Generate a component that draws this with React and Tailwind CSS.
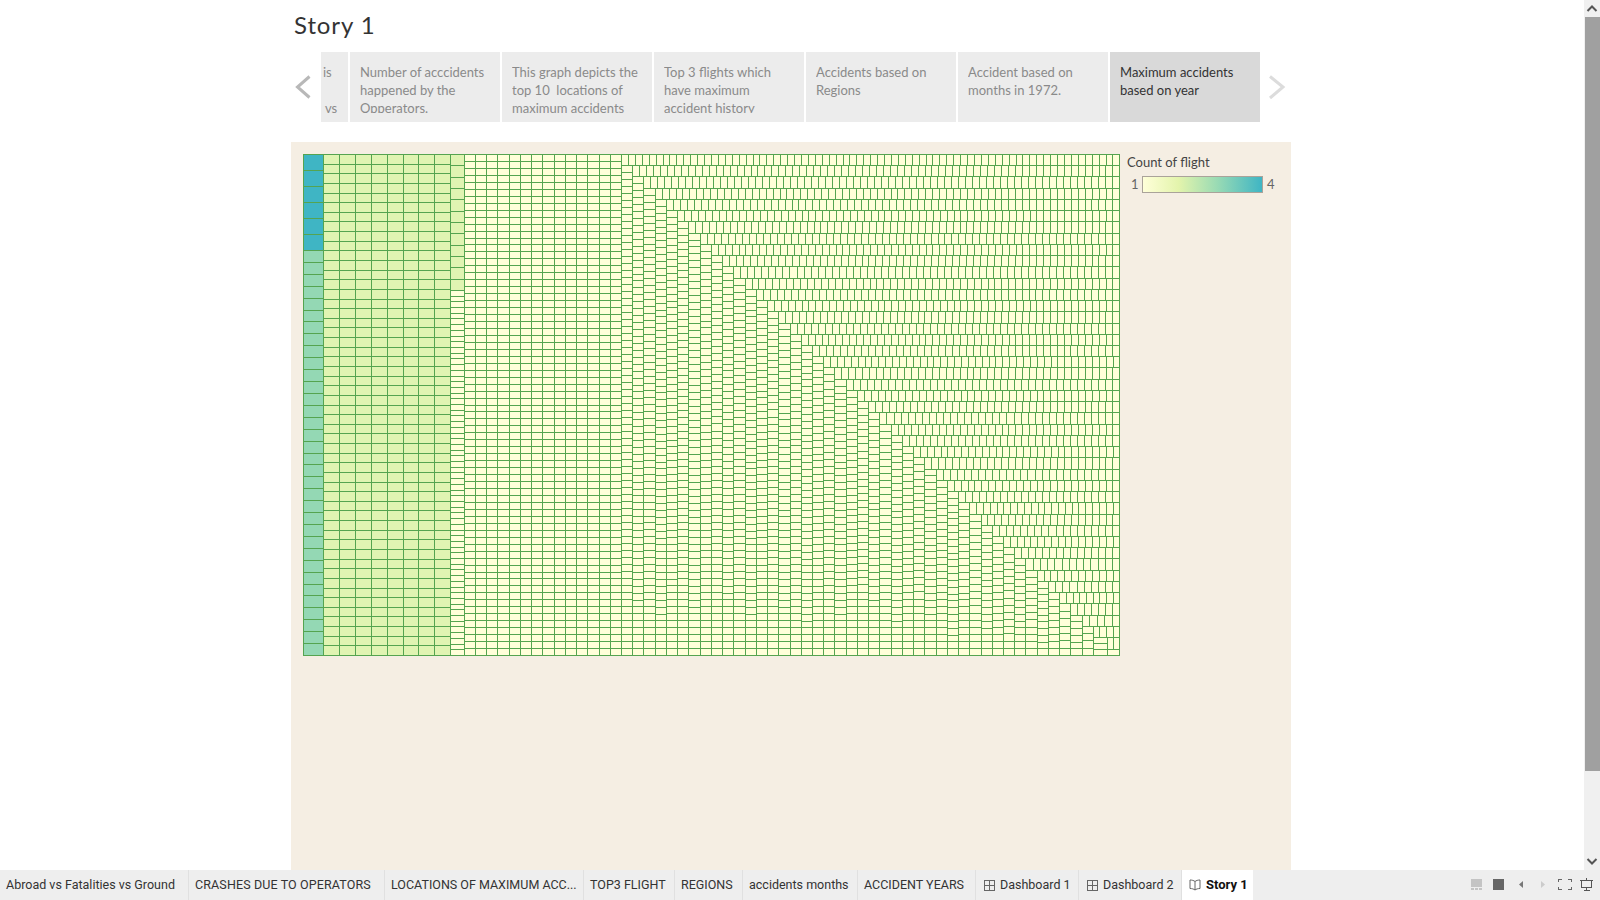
import React from "react";

const LEFT = 303;
const TOP = 154;
const RIGHT = 1119.4;
const BOTTOM = 655;

const TEAL = "#3fb5c4";
const MINT = "#94d8b4";
const LIME = "#e0f4b2";
const CREAM = "#ffffd9";
const CELL = 6.96;
const BLOCK_START = 323;
const BLOCK_COL = 15.9;
const BLOCK_END = BLOCK_START + 8 * BLOCK_COL;

// one column of cells stacked from y0 to y1
const stack = (cells, x0, x1, y0, y1, n, fill) => {
  for (let i = 0; i < n; i++) {
    cells.push({ x0, x1, y0: y0 + ((y1 - y0) * i) / n, y1: y0 + ((y1 - y0) * (i + 1)) / n, fill });
  }
};

// one row of cells side by side from x0 to x1
const line = (cells, x0, x1, y0, y1, n, fill) => {
  for (let i = 0; i < n; i++) {
    cells.push({ x0: x0 + ((x1 - x0) * i) / n, x1: x0 + ((x1 - x0) * (i + 1)) / n, y0, y1, fill });
  }
};

const buildTreemap = () => {
  const cells = [];

  // count 4 and count 3
  stack(cells, LEFT, BLOCK_START, TOP, 250, 6, TEAL);
  stack(cells, LEFT, BLOCK_START, 250, BOTTOM, 34, MINT);

  // count 2 block
  for (let c = 0; c < 8; c++) {
    stack(cells, BLOCK_START + c * BLOCK_COL, BLOCK_START + (c + 1) * BLOCK_COL, TOP, BOTTOM, 52, LIME);
  }
  const split = TOP + 12 * 11.33;
  stack(cells, BLOCK_END, 463.7, TOP, split, 12, LIME);
  stack(cells, BLOCK_END, 463.7, split, BOTTOM, Math.round((BOTTOM - split) / 5.68), CREAM);

  // full height count 1 columns
  const step = 11.235;
  for (let c = 0; c < 13; c++) {
    stack(cells, 463.7 + c * step, 463.7 + (c + 1) * step, TOP, BOTTOM, 72, CREAM);
  }

  // staircase, a column then a row, each one shrinking the free area
  const x0 = 463.7 + 13 * step;
  for (let i = 0; i < 43; i++) {
    const x = x0 + i * step;
    const y = TOP + i * step;
    stack(cells, x, x + step, y, BOTTOM, Math.round((BOTTOM - y) / CELL), CREAM);
    line(cells, x + step, RIGHT, y, y + step, Math.round((RIGHT - x - step) / CELL), CREAM);
  }

  // last corner
  const cx = x0 + 43 * step;
  const cy = TOP + 43 * step;
  stack(cells, cx, 1106.5, cy, BOTTOM, 3, CREAM);
  stack(cells, 1106.5, 1112.7, cy, 649, 1, CREAM);
  stack(cells, 1112.7, RIGHT, cy, 649, 1, CREAM);
  cells.push({ x0: 1106.5, x1: RIGHT, y0: 649, y1: BOTTOM, fill: CREAM });
  return cells;
};

const snap = (v) => Math.round(v) + 0.5;

const Treemap = () => {
  const cells = buildTreemap();
  return (
    <svg width="818" height="502" viewBox="303 154 818 502" shapeRendering="crispEdges" className="block shrink-0">
      {cells.map((c, i) => (
        <rect
          key={i}
          x={snap(c.x0)}
          y={snap(c.y0)}
          width={snap(c.x1) - snap(c.x0)}
          height={snap(c.y1) - snap(c.y0)}
          fill={c.fill}
          stroke="#55a450"
          strokeWidth="1"
        />
      ))}
    </svg>
  );
};

const stories = [
  "Number of acccidents happened by the Opperators.",
  "This graph depicts the top 10  locations of maximum accidents",
  "Top 3 flights which have maximum accident history",
  "Accidents based on Regions",
  "Accident based on months in 1972.",
  "Maximum accidents based on year",
];

const StoryCard = ({ text, active }) => (
  <div className={`w-[150px] h-[70px] pl-[10px] pr-2 pt-[11px] ${active ? "bg-[#d9d9d9] text-[#333333]" : "bg-[#ececec] text-[#8a8a8a]"}`}>
    <div className="h-[50px] overflow-hidden whitespace-pre-wrap text-[13px] leading-[18px]">{text}</div>
  </div>
);

const GridIcon = () => (
  <svg width="11" height="11" viewBox="0 0 11 11" fill="none" stroke="#666666" shapeRendering="crispEdges" className="shrink-0">
    <rect x="0.5" y="0.5" width="10" height="10" />
    <path d="M5.5 0.5V10.5M0.5 5.5H10.5" />
  </svg>
);

const BookIcon = () => (
  <svg width="12" height="12" viewBox="0 0 12 12" fill="none" stroke="#666666" className="shrink-0">
    <path d="M6 2.5C4.8 1.5 3 1 1 1v8.5c2 0 3.8.5 5 1.5 1.2-1 3-1.500 5-1.500V1C9 1 7.200 1.500 6 2.500zM6 2.500V11" />
  </svg>
);

const tabs = [
  { label: "Abroad vs Fatalities vs Ground", width: "w-[189px]" },
  { label: "CRASHES DUE TO OPERATORS", width: "w-[196px]", wide: true },
  { label: "LOCATIONS OF MAXIMUM ACC...", width: "w-[199px]" },
  { label: "TOP3 FLIGHT", width: "w-[91px]" },
  { label: "REGIONS", width: "w-[68px]" },
  { label: "accidents months", width: "w-[115px]" },
  { label: "ACCIDENT YEARS", width: "w-[118px]" },
  { label: "Dashboard 1", width: "w-[103px]", icon: <GridIcon /> },
  { label: "Dashboard 2", width: "w-[103px]", icon: <GridIcon /> },
];

const Tab = ({ label, width, icon, wide }) => (
  <div className={`${width} h-full flex items-center gap-[5px] ${icon ? "pl-[8px]" : "pl-[6px]"} border-r border-[#e0e0e0] whitespace-nowrap text-[#333333]`}>
    {icon}
    <span className={wide ? "tracking-[0.12px]" : ""}>{label}</span>
  </div>
);

const ViewControls = () => (
  <div className="ml-auto flex items-center pr-[7px]">
    <svg width="122" height="14" viewBox="0 0 122 14" shapeRendering="crispEdges">
      <rect x="0" y="1" width="11" height="8" fill="#c4c4c4" />
      <rect x="0" y="10" width="3" height="2" fill="#c4c4c4" />
      <rect x="4" y="10" width="3" height="2" fill="#c4c4c4" />
      <rect x="8" y="10" width="3" height="2" fill="#c4c4c4" />
      <rect x="22" y="1" width="11" height="11" fill="#666666" />
      <path d="M52 3V10L48 6.500z" fill="#777777" shapeRendering="auto" />
      <path d="M70 3V10L74 6.500z" fill="#cccccc" shapeRendering="auto" />
      <path d="M87.500 4V1.500H91M97 1.500H100.500V4M100.500 9V11.500H97M91 11.500H87.500V9" fill="none" stroke="#666666" />
      <path d="M109 2.500H122M110.500 2.500V9.500H120.500V2.500M115.500 9.500V12.500M112.500 12.500H118.500M115.500 0V2" fill="none" stroke="#555555" />
    </svg>
  </div>
);

export default function App() {
  return (
    <div className="w-full h-[900px] flex flex-col overflow-hidden bg-white font-['Lato',sans-serif]">
      <div className="h-[870px] flex">
        <div className="flex-1 pl-[291px]">
          <div className="w-[1000px] h-full flex flex-col">
            <h1 className="h-[52px] pl-[3px] pt-[8px] text-[24px] leading-[34px] tracking-[0.9px] font-normal text-[#333333]">Story 1</h1>

            <div className="h-[70px] flex items-center">
              <div className="w-[30px] flex justify-start">
                <svg width="20" height="26" viewBox="0 0 20 26" fill="none" stroke="#b8b8b8" strokeWidth="3">
                  <path d="M18.500 2.500L6.500 13l12 10.500" />
                </svg>
              </div>
              <div className="flex gap-[2px]">
                <div className="w-[27px] h-[70px] pl-[2px] pt-[11px] bg-[#ececec] text-[#8a8a8a] text-[13px] leading-[18px]">
                  <div>is</div>
                  <div>&nbsp;</div>
                  <div className="pl-[2px]">vs</div>
                </div>
                {stories.map((s, i) => (
                  <StoryCard key={i} text={s} active={i === stories.length - 1} />
                ))}
              </div>
              <svg width="20" height="26" viewBox="0 0 20 26" fill="none" stroke="#dcdcdc" strokeWidth="3" className="ml-[7px]">
                <path d="M3 2.500l13 10.500L3 24" />
              </svg>
            </div>

            <div className="mt-[20px] flex-1 flex items-start pl-[12px] pt-[12px] bg-[#f5eee3]">
              <Treemap />
              <div className="ml-[6px] -mt-px">
                <div className="text-[13px] leading-[18px] text-[#444444]">Count of flight</div>
                <div className="mt-[4px] flex items-center text-[13px] text-[#666666]">
                  <span className="w-[15px] pl-[4px]">1</span>
                  <div className="w-[121px] h-[17px] border border-[#aaa39a] bg-[linear-gradient(to_right,#ffffd9,#e3f4ac_30%,#9adbb4_62%,#3fb5c4)]" />
                  <span className="pl-[4px]">4</span>
                </div>
              </div>
            </div>
          </div>
        </div>

        <div className="w-[16px] h-full flex flex-col items-center bg-[#f0f0f0]">
          <svg width="16" height="17" viewBox="0 0 16 17" fill="none" stroke="#555555" strokeWidth="2" className="shrink-0">
            <path d="M3.500 11L8 6.500 12.500 11" />
          </svg>
          <div className="w-[15px] h-[754px] bg-[#a0a0a0]" />
          <svg width="16" height="16" viewBox="0 0 16 16" fill="none" stroke="#555555" strokeWidth="2" className="mt-auto shrink-0">
            <path d="M3.500 5L8 9.500 12.500 5" />
          </svg>
        </div>
      </div>

      <div className="h-[30px] flex items-center bg-[#eeeeee] font-['Roboto',sans-serif] text-[12.5px]">
        {tabs.map((t) => (
          <Tab key={t.label} {...t} />
        ))}
        <div className="w-[71px] h-full flex items-center gap-[5px] pl-[7px] bg-white font-bold text-[13px] text-[#111111]">
          <BookIcon />
          <span>Story 1</span>
        </div>
        <ViewControls />
      </div>
    </div>
  );
}
